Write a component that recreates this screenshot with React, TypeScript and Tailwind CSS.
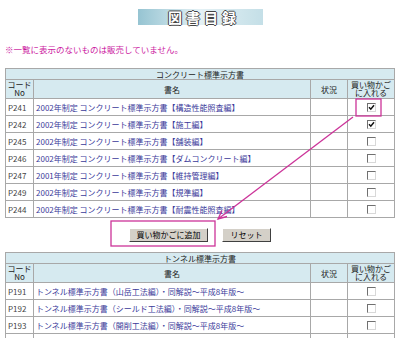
import React from "react";

type Book = { code: string; title: string; checked?: boolean };

const concreteBooks: Book[] = [
  { code: "P241", title: "2002年制定 コンクリート標準示方書【構造性能照査編】", checked: true },
  { code: "P242", title: "2002年制定 コンクリート標準示方書【施工編】", checked: true },
  { code: "P245", title: "2002年制定 コンクリート標準示方書【舗装編】" },
  { code: "P246", title: "2002年制定 コンクリート標準示方書【ダムコンクリート編】" },
  { code: "P247", title: "2001年制定 コンクリート標準示方書【維持管理編】" },
  { code: "P249", title: "2002年制定 コンクリート標準示方書【規準編】" },
  { code: "P244", title: "2002年制定 コンクリート標準示方書【耐震性能照査編】" },
];

const tunnelBooks: Book[] = [
  { code: "P191", title: "トンネル標準示方書（山岳工法編）・同解説～平成8年版～" },
  { code: "P192", title: "トンネル標準示方書（シールド工法編）・同解説～平成8年版～" },
  { code: "P193", title: "トンネル標準示方書（開削工法編）・同解説～平成8年版～" },
  { code: "P190", title: "トンネル標準示方書・同解説" },
];

function CheckBox({ checked }: { checked?: boolean }) {
  return (
    <span className="inline-flex items-center justify-center w-[9px] h-[9px] bg-white border border-t-[#707070] border-l-[#707070] border-b-[#d8d8d8] border-r-[#d8d8d8] align-middle">
      {checked && (
        <svg width="7" height="7" viewBox="0 0 7 7">
          <path d="M1 3.2 L2.8 5.2 L6 1.2" fill="none" stroke="#111" strokeWidth="1.5" />
        </svg>
      )}
    </span>
  );
}

function BookTable({ title, books }: { title: string; books: Book[] }) {
  const cell = "p-0 border border-[#a8a8a8]";
  const head = `${cell} font-normal text-[#222] text-center`;
  return (
    <table className="ml-[5px] w-[389px] table-fixed border-collapse text-[8px] leading-[9px]">
      <colgroup>
        <col className="w-[28px]" />
        <col className="w-[277px]" />
        <col className="w-[37px]" />
        <col className="w-[47px]" />
      </colgroup>
      <thead>
        <tr className="h-[11px] bg-[#d6eaf0]">
          <th colSpan={4} className={head}>
            {title}
          </th>
        </tr>
        <tr className="h-[19px] bg-[#d6eaf0]">
          <th className={`${head} leading-[8.5px]`}>
            コード
            <br />
            No
          </th>
          <th className={head}>書名</th>
          <th className={head}>状況</th>
          <th className={`${head} leading-[8.5px]`}>
            買い物かご
            <br />
            に入れる
          </th>
        </tr>
      </thead>
      <tbody>
        {books.map((b) => (
          <tr key={b.code} className="h-[17px] bg-white">
            <td className={`${cell} pl-[2px] text-[#444]`}>{b.code}</td>
            <td className={`${cell} pl-[2px] text-[#3a3a9a] whitespace-nowrap overflow-hidden`}>
              {b.title}
            </td>
            <td className={cell}></td>
            <td className={`${cell} text-center`}>
              <CheckBox checked={b.checked} />
            </td>
          </tr>
        ))}
      </tbody>
    </table>
  );
}

function Annotations() {
  return (
    <svg
      className="absolute left-0 top-0 pointer-events-none"
      width="400"
      height="338"
      viewBox="0 0 400 338"
    >
      <g fill="none" stroke="#cc3399" strokeWidth="1.3">
        <rect x="356" y="99" width="25" height="17" />
        <rect x="111" y="221" width="104" height="25" />
        <line x1="353" y1="117" x2="218" y2="219" />
        <polyline points="227,216.5 218,219 222,210.5" />
      </g>
    </svg>
  );
}

export default function App() {
  return (
    <div className="relative w-[400px] h-[338px] overflow-hidden bg-white font-['Noto_Sans_CJK_JP',sans-serif]">
      <div className="mx-auto mt-[9px] w-[125px] h-[16px] flex items-center justify-center bg-gradient-to-r from-[#96c4d2] via-[#e4f1f5] to-[#c4dfe7]">
        <span className="pl-[8px] text-[14px] leading-[16px] font-bold tracking-[4px] text-white [text-shadow:1px_0_#444,-1px_0_#444,0_1px_#444,0_-1px_#444]">
          図書目録
        </span>
      </div>

      <p className="mt-[19px] px-[5px] text-[8.5px] leading-[11px] text-[#cc1a9f]">
        ※一覧に表示のないものは販売していません。
      </p>

      <div className="mt-[13px]">
        <BookTable title="コンクリート標準示方書" books={concreteBooks} />
      </div>

      <div className="mt-[10px] flex justify-center gap-[14px]">
        <button className="w-[79px] h-[14px] bg-[#d4d0c8] border border-t-white border-l-white border-b-[#404040] border-r-[#404040] text-[8px] leading-[10px] text-black">
          買い物かごに追加
        </button>
        <button className="w-[49px] h-[14px] bg-[#d4d0c8] border border-t-white border-l-white border-b-[#404040] border-r-[#404040] text-[8px] leading-[10px] text-black">
          リセット
        </button>
      </div>

      <div className="mt-[10px]">
        <BookTable title="トンネル標準示方書" books={tunnelBooks} />
      </div>

      <Annotations />
    </div>
  );
}
